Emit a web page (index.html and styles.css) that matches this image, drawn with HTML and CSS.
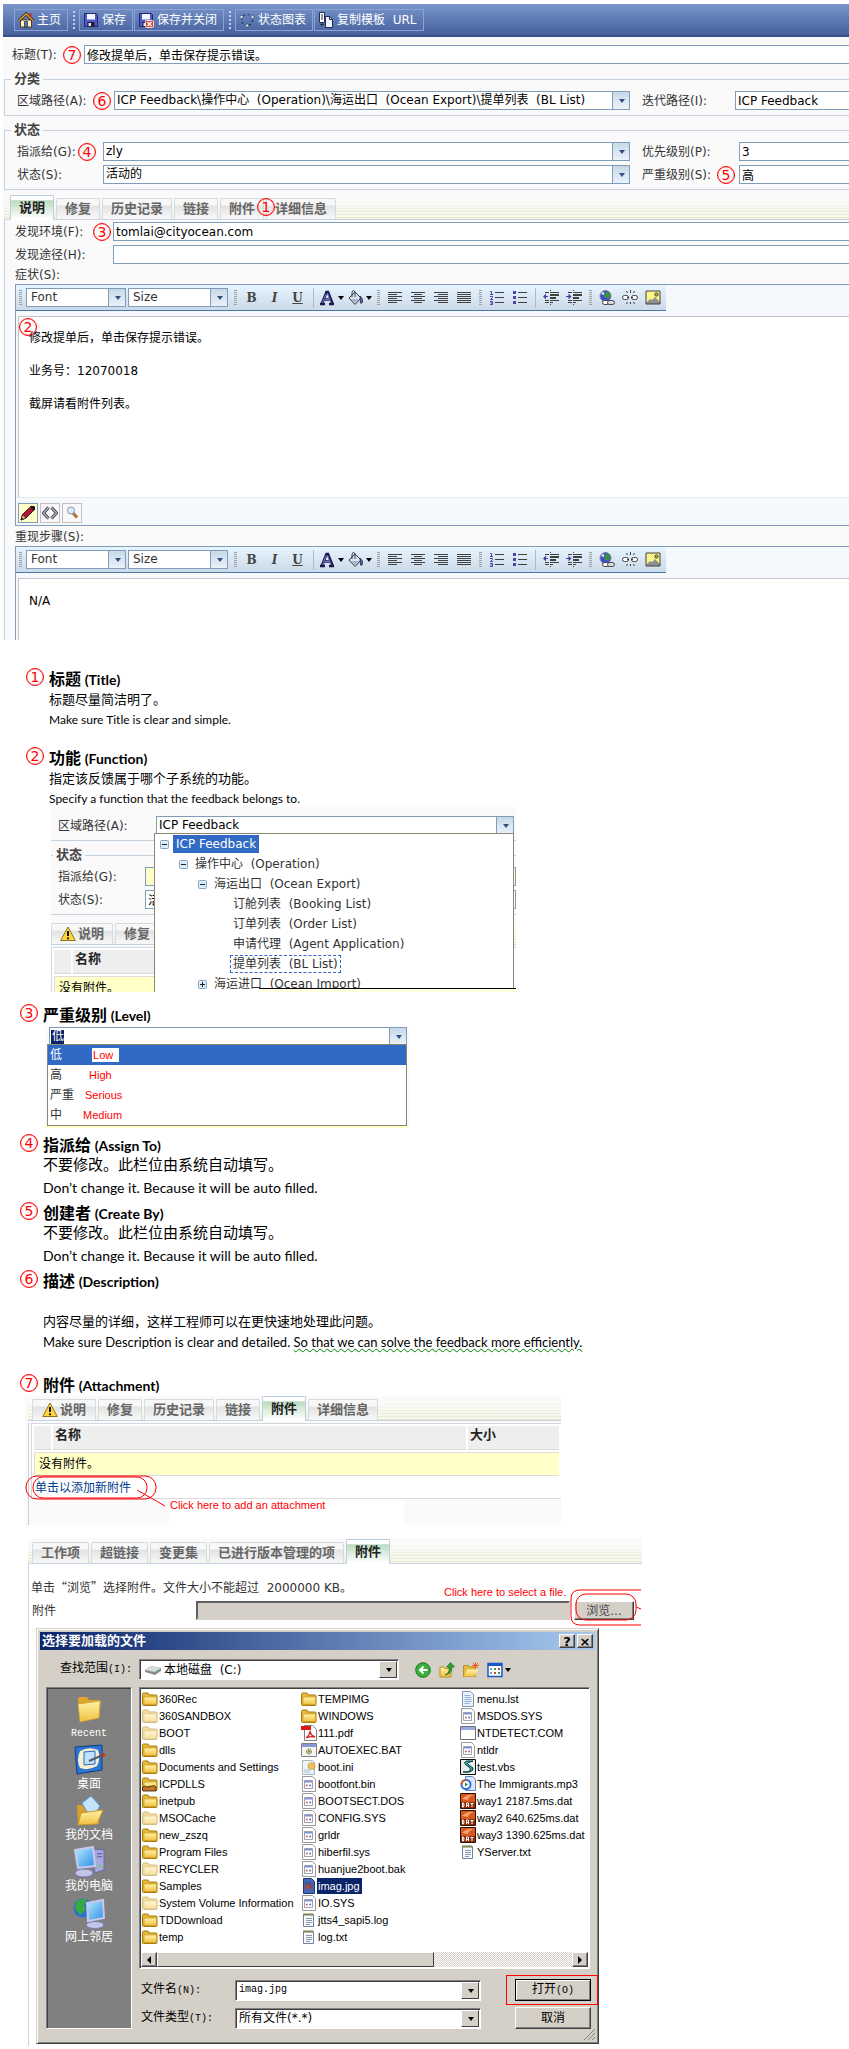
FILE: index.html
```html
<!DOCTYPE html>
<html lang="zh-CN">
<head>
<meta charset="utf-8">
<title>ICP Feedback</title>
<link rel="stylesheet" href="styles.css">
</head>
<body>
<svg class="defs" aria-hidden="true">
  <defs>
    <linearGradient id="gFolder" x1="0" y1="0" x2="0" y2="1"><stop offset="0" stop-color="#fff3a8"/><stop offset="1" stop-color="#f0c040"/></linearGradient>
    <linearGradient id="gScreen" x1="0" y1="0" x2="1" y2="1"><stop offset="0" stop-color="#b8ecff"/><stop offset="1" stop-color="#2a8ce8"/></linearGradient>
    <pattern id="pDots" width="2" height="2" patternUnits="userSpaceOnUse"><rect width="2" height="2" fill="#ffffc0"/><rect width="1" height="1" fill="#f4ee50"/><rect x="1" y="1" width="1" height="1" fill="#f4ee50"/></pattern>
  </defs>
  <symbol id="i-home" viewBox="0 0 16 16"><path d="M2.5 8h11v7h-11z" fill="#fff2c8" stroke="#5a4020"/><path d="M1 8.5 8 2l7 6.5" fill="none" stroke="#2a2010" stroke-width="3"/><path d="M1 8.5 8 2l7 6.5" fill="none" stroke="#e8a830" stroke-width="1.4"/><path d="M11.500 1h2v4h-2z" fill="#c03020"/><path d="M6.500 9.500h3V15h-3z" fill="#5080c0" stroke="#403020" stroke-width=".8"/></symbol>
  <symbol id="i-save" viewBox="0 0 16 16"><path d="M1.500 1.500h12l1 1v12h-13z" fill="#5058c8" stroke="#202878"/><path d="M4 2h8v5.500H4z" fill="#f4f6ff"/><path d="M4.500 10h7v4.500h-7z" fill="#202030"/><path d="M5.500 11h2.500v3H5.500z" fill="#e8e8f0"/></symbol>
  <symbol id="i-saveclose" viewBox="0 0 16 16"><use href="#i-save"/><rect x="7.500" y="8.500" width="8" height="7" rx="1" fill="#e04030" stroke="#fff" stroke-width=".8"/><path d="m9.500 10 4 4m0-4-4 4" stroke="#fff" stroke-width="1.500"/></symbol>
  <symbol id="i-chart" viewBox="0 0 16 16"><circle cx="8" cy="8" r="5.500" fill="none" stroke="#26304c" stroke-width="1.200" stroke-dasharray="2 2.300"/><g fill="#dfe6f4" stroke="#26304c" stroke-width=".5"><circle cx="2.500" cy="5" r="1.600"/><circle cx="13.500" cy="5" r="1.600"/><circle cx="8" cy="13.500" r="1.600"/></g></symbol>
  <symbol id="i-copy" viewBox="0 0 16 16"><path d="M1.500.5h5v10h-5z" fill="#fff" stroke="#203050"/><path d="M3 3h2M3 5h2M3 7h2" stroke="#203050"/><path d="M7.500 4.500h4l3 3v8h-7z" fill="#eef2fa" stroke="#203050"/><path d="M11.500 4.500v3h3" fill="none" stroke="#203050"/><path d="M2 12.500h4m-2-2v4" stroke="#203050"/></symbol>
  <symbol id="i-color" viewBox="0 0 16 16"><path d="M1 14h5m4 0h5M3 13.500 7.500 2h1.500l4.500 11.500M5.500 9.500h6" fill="none" stroke="#18184c" stroke-width="2.600"/><path d="M7 3.500 3.500 13M8.500 3l3.500 10M5.500 9.500h5" fill="none" stroke="#7078c8" stroke-width="1"/></symbol>
  <symbol id="i-bucket" viewBox="0 0 16 16"><path d="m2 8 6-6 6 6-6 6.500z" fill="#dfe4ec" stroke="#30384c"/><path d="M5 7V3q0-2.500 1.500-2.500T8 3v4" fill="none" stroke="#30384c"/><path d="M13 6q3 2 2.500 6-.5 2-2 1z" fill="#5a6ab8" stroke="#20284c" stroke-width=".8"/><path d="m4 9 4 4 4-4z" fill="#a8b4c8"/></symbol>
  <symbol id="i-left" viewBox="0 0 16 16"><path d="M1 2.500h14M1 4.500h9M1 6.500h14M1 8.500h9M1 10.500h14M1 12.500h9" stroke="#404040"/></symbol>
  <symbol id="i-center" viewBox="0 0 16 16"><path d="M1 2.500h14M4 4.500h8M1 6.500h14M4 8.500h8M1 10.500h14M4 12.500h8" stroke="#404040"/></symbol>
  <symbol id="i-right" viewBox="0 0 16 16"><path d="M1 2.500h14M5 4.500h10M1 6.500h14M5 8.500h10M1 10.500h14M5 12.500h10" stroke="#404040"/></symbol>
  <symbol id="i-full" viewBox="0 0 16 16"><path d="M1 2.500h14M1 4.500h14M1 6.500h14M1 8.500h14M1 10.500h14M1 12.500h14" stroke="#404040"/></symbol>
  <symbol id="i-ol" viewBox="0 0 16 16"><path d="M6 2.500h9M6 7.500h9M6 12.500h9" stroke="#404040"/><path d="M1 1.500h1.500v3M1 4.500h3M1 6.500h2.500v1L1.500 9.500H4M1 11.500h2.500v3H1m.5-1.500h2" fill="none" stroke="#4848a8"/></symbol>
  <symbol id="i-ul" viewBox="0 0 16 16"><path d="M6 2.500h9M6 7.500h9M6 12.500h9" stroke="#404040"/><path d="M1 1h3v3H1zM1 6h3v3H1zM1 11h3v3H1z" fill="#4848a8"/></symbol>
  <symbol id="i-outdent" viewBox="0 0 16 16"><path d="M2 2.500h4m1 0h9M2 10.500h4m1 0h9M2 12.500h4m1 0h3M7.500 0v1m0 13v1" stroke="#404040"/><path d="M7 4h9v2H7zM7 7h6v2H7z" fill="#404040"/><path d="M0 6.500 3 3.500V6h2v1H3v2.500z" fill="#4040a0"/></symbol>
  <symbol id="i-indent" viewBox="0 0 16 16"><path d="M2 2.500h4m1 0h9M2 10.500h4m1 0h9M2 12.500h4m1 0h3M7.500 0v1m0 13v1" stroke="#404040"/><path d="M7 4h9v2H7zM7 7h6v2H7z" fill="#404040"/><path d="M5.500 6.500 2.500 3.500V6H0v1h2.500v2.500z" fill="#4040a0"/></symbol>
  <symbol id="i-link" viewBox="0 0 16 16"><circle cx="6.500" cy="6" r="5.500" fill="#4048e0" stroke="#808488"/><path d="M5 4q2-3 5-2 2 3 1 5-2 3-4 1-3-1-2-4z" fill="#389048"/><path d="M2 4q1-2 3-2v3z" fill="#e8eef8"/><rect x="3.500" y="10.500" width="7" height="4" rx="2" fill="#fff" stroke="#404040"/><rect x="8.500" y="10.500" width="7" height="4" rx="2" fill="#d8dce0" stroke="#404040"/></symbol>
  <symbol id="i-unlink" viewBox="0 0 16 16"><rect x=".5" y="5.500" width="6" height="4" rx="2" fill="#fff" stroke="#404040"/><rect x="9.500" y="5.500" width="6" height="4" rx="2" fill="#fff" stroke="#404040"/><path d="M5 7.500h2m2 0h2M4.500 1l1 2M8.500 0v3M12.500 1l-1 2M4.500 14l1-2M8.500 14v-2M12.500 14l-1-2" stroke="#404040"/></symbol>
  <symbol id="i-image" viewBox="0 0 16 16"><path d="M1 1h14v13H1z" fill="url(#pDots)"/><path d="m1 13 4-4 2 1 3-3 5 5v2H1z" fill="#909090"/><circle cx="11.500" cy="4.500" r="1.700" fill="#a8a040" stroke="#404040" stroke-width=".8"/><path d="M1 1h14v13H1z" fill="none" stroke="#404040"/></symbol>
  <symbol id="i-pencil" viewBox="0 0 16 16"><path d="m1 15 1.500-5.500L11 1.500l3.500 3L6 13z" fill="#b01838" stroke="#381018"/><path d="m1 15 1.500-5L6 13z" fill="#f0d8b0" stroke="#381018" stroke-width=".7"/><path d="m1 15 .8-2.500L3.500 14zM10 2l1-1h3l1 1v3l-1.500.5z" fill="#201018"/></symbol>
  <symbol id="i-html" viewBox="0 0 16 16"><path d="M6.500 2.500 1.500 8l5 5.500M9.500 2.500l5 5.500-5 5.500" fill="none" stroke="#303040" stroke-width="3"/><path d="M6.500 2.500 1.500 8l5 5.500M9.500 2.500l5 5.500-5 5.500" fill="none" stroke="#b0b0c8" stroke-width="1.400"/></symbol>
  <symbol id="i-zoom" viewBox="0 0 16 16"><path d="m9 8 4 4.500" stroke="#b07020" stroke-width="3"/><circle cx="7" cy="5.500" r="3.500" fill="#d8f0ff" stroke="#8890a8"/></symbol>
  <symbol id="i-warn" viewBox="0 0 16 16"><path d="M8 1 15.300 14.500H.7z" fill="#ffd83a" stroke="#8a7420" stroke-linejoin="round"/><path d="M8 5v5" stroke="#101010" stroke-width="2"/><circle cx="8" cy="12.300" r="1.100" fill="#101010"/></symbol>
  <symbol id="i-minus" viewBox="0 0 9 9"><rect x=".5" y=".5" width="8" height="8" rx="1" fill="#dcebf8" stroke="#88a4c0"/><path d="M2 4.500h5" stroke="#202020"/></symbol>
  <symbol id="i-plus" viewBox="0 0 9 9"><rect x=".5" y=".5" width="8" height="8" rx="1" fill="#dcebf8" stroke="#88a4c0"/><path d="M2 4.500h5M4.500 2v5" stroke="#202020"/></symbol>

  <symbol id="f-dir" viewBox="0 0 16 16"><path d="M.5 3.500q0-1.500 1-1.500h4.500l1 2h7q1 0 1 1v8.500q0 1-1 1h-12.500q-1 0-1-1z" fill="#e8b838" stroke="#a87c10"/><path d="M2 6h12.500v7.500H2z" fill="url(#gFolder)" stroke="#c89820" stroke-width=".7"/></symbol>
  <symbol id="f-share" viewBox="0 0 16 16"><use href="#f-dir"/><path d="M0 12q2-3 5-1l5-1q3-1 4 1v4H1z" fill="#c07828" stroke="#301c08" stroke-width=".8"/></symbol>
  <symbol id="f-sys" viewBox="0 0 16 16"><path d="M1.500.5h10l3 3v12h-13z" fill="#fdfdfd" stroke="#9a9a9a"/><path d="M3.500 4.500h8v8h-8z" fill="#fff" stroke="#a0a0b0"/><path d="M4 5h7v1.500H4z" fill="#8090e0"/><circle cx="5.800" cy="9.500" r="1" fill="#d06060"/><circle cx="9.200" cy="9.500" r="1" fill="#6070d0"/></symbol>
  <symbol id="f-pdf" viewBox="0 0 16 16"><path d="M3.500.5h8l4 4v11h-12z" fill="#fff" stroke="#808080"/><path d="M0 1h10v4H0z" fill="#d81818"/><path d="M5 13q4-3 4-7 1 5 5 6-5-1-9 1z" fill="none" stroke="#d82020" stroke-width="1.300"/></symbol>
  <symbol id="f-bat" viewBox="0 0 16 16"><path d="M.5 1.500h15v13H.5z" fill="#f4f4f0" stroke="#808080"/><path d="M1 2h14v3H1z" fill="#8898d0"/><circle cx="8" cy="9.500" r="2.500" fill="#e0d890" stroke="#606040" stroke-dasharray="1.300 .8"/><circle cx="8" cy="9.500" r="1" fill="#606040"/></symbol>
  <symbol id="f-com" viewBox="0 0 16 16"><path d="M.5 1.500h15v13H.5z" fill="#fff" stroke="#707078"/><path d="M1 2h14v3H1z" fill="#98a8e0"/></symbol>
  <symbol id="f-ini" viewBox="0 0 16 16"><path d="M1.500 1.500h10l2 2v12h-12z" fill="#eaf4fa" stroke="#a8b8c0"/><circle cx="10.500" cy="7" r="3.500" fill="#f0c060" stroke="#b88c30" stroke-dasharray="1.600 1"/><path d="M3 11h6M3 13h6" stroke="#a8c0d0"/></symbol>
  <symbol id="f-txt" viewBox="0 0 16 16"><path d="M2.500 2.500h10v12h-10z" fill="#f4f8ff" stroke="#7080a0"/><path d="M3 1v3m2-3v3m2-3v3m2-3v3m2-3v3" stroke="#808030"/><path d="M5 6.500h6M5 8.500h6M5 10.500h6M5 12.500h4" stroke="#708090" stroke-width=".8"/></symbol>
  <symbol id="f-lst" viewBox="0 0 16 16"><path d="M2.500.5h8l3 3v12h-11z" fill="#eaf2ff" stroke="#8094b8"/><path d="M4.500 4.500h6M4.500 6.500h7M4.500 8.500h7M4.500 10.500h7M4.500 12.500h5" stroke="#88a4d8" stroke-width=".9"/></symbol>
  <symbol id="f-vbs" viewBox="0 0 16 16"><path d="M.5.500h15v15H.5z" fill="#e8eeee" stroke="#101010"/><path d="M13 2H7q-4 1-1 4l3 2q3 3-1 5H3h6q5-1 4-4l-4-3q-3-2 1-3z" fill="#30b0a8" stroke="#083838"/></symbol>
  <symbol id="f-mp3" viewBox="0 0 16 16"><path d="M5.500.5h7l3 3v11h-10z" fill="#dce8ff" stroke="#6080c0"/><circle cx="6" cy="8.500" r="4.500" fill="#fff" stroke="#3070d8" stroke-width="2"/><path d="M1.500 8.500A4.500 4.500 0 0 1 6 4" fill="none" stroke="#e06020" stroke-width="2"/><path d="m5 6.500 3 2-3 2z" fill="#209040"/></symbol>
  <symbol id="f-dat" viewBox="0 0 16 16"><path d="M.5.500h15v15H.5z" fill="#d85820" stroke="#301000"/><path d="M2 6q5-5 12-4-5 1-6 5z" fill="#f4a070"/><path d="M1 9h14v6H1z" fill="#8c2c08"/><path d="M2.500 10v4h1q1-2 0-4zM6.500 14v-4h2v4m-2-1.500h2M10.500 10.500h3m-1.500 0V14" fill="none" stroke="#fff"/></symbol>
  <symbol id="f-jpg" viewBox="0 0 16 16"><path d="M2.500.5h8l3 3v12h-11z" fill="#4468b8" stroke="#203878"/><path d="M4 4h8v7H4z" fill="#705070"/><path d="M5 7h3v4H5z" fill="#b84838"/><path d="M4 4h8v2H4z" fill="#405890"/></symbol>

  <symbol id="p-recent" viewBox="0 0 32 32"><path d="M5 6q0-2 2-2h7l2 3h10q2 0 2 2l-2 16-19 4z" fill="#e0a828"/><path d="m5 11 22-3-1 17-19 4z" fill="url(#gFolder)" stroke="#c89828" stroke-width=".7"/></symbol>
  <symbol id="p-desk" viewBox="0 0 32 32"><path d="m2 3 27-2v25L4 30z" fill="#2c74d0" stroke="#103c88"/><path d="M7 7q9-5 18-1 3 8-1 16-9 5-17 2-4-8 0-17z" fill="#f6efd0"/><path d="m11 8 11-1v13l-11 1z" fill="#bfe0ff" stroke="#2868c0"/><path d="m16 17 14-6" stroke="#505868" stroke-width="2"/><circle cx="30" cy="11" r="2" fill="#c83018"/></symbol>
  <symbol id="p-docs" viewBox="0 0 32 32"><path d="M4 10h8l2 3h12v16H5z" fill="#d8a028"/><path d="m9 8 9-7 9 10-9 13z" fill="#c4e4fc" stroke="#5898d8"/><path d="m5 30 3-12 22-3-6 14z" fill="url(#gFolder)" stroke="#c89828"/></symbol>
  <symbol id="p-comp" viewBox="0 0 32 32"><path d="m20 3 11 1v20l-9 3z" fill="#a8a8dc" stroke="#6868a8"/><path d="m24 8 5-.500M24 11l5-.500" stroke="#585898"/><circle cx="27" cy="20" r="1.500" fill="#50e050"/><ellipse cx="11" cy="27" rx="9" ry="4" fill="#c4c4e8" stroke="#7878b0"/><path d="m2 4 18-3 2 19-17 2z" fill="url(#gScreen)" stroke="#c8c8ec" stroke-width="2"/></symbol>
  <symbol id="p-net" viewBox="0 0 32 32"><circle cx="10" cy="11" r="9.500" fill="#2870d0"/><path d="M3 5q6-5 11-2l-3 5 2 5-6 5-5-6z" fill="#38a840"/><ellipse cx="22" cy="28" rx="9" ry="3.500" fill="#c4c4e8" stroke="#7878b0"/><path d="m14 6 16-3 1 18-16 3z" fill="url(#gScreen)" stroke="#c8c8ec" stroke-width="2"/></symbol>

  <symbol id="n-drive" viewBox="0 0 16 16"><path d="m0 8 6-4 10 2v3l-6 4-10-3z" fill="#888c90"/><path d="m0 8 6-4 10 2-6 4z" fill="#d8dcdf"/><circle cx="12" cy="9.500" r="1" fill="#40c040"/></symbol>
  <symbol id="n-back" viewBox="0 0 16 16"><circle cx="8" cy="8" r="7.300" fill="#3cae3c" stroke="#187818"/><path d="M12.500 8H5m3.500-3.500L5 8l3.500 3.500" fill="none" stroke="#fff" stroke-width="2"/></symbol>
  <symbol id="n-up" viewBox="0 0 16 16"><path d="M1 5h4l1 1.500h6V15H1z" fill="url(#gFolder)" stroke="#b89028"/><path d="M6 13q5-2 4-8H7.500L11.500.500l4 4.500H13q0 7-7 8z" fill="#30a030" stroke="#106010" stroke-width=".6"/></symbol>
  <symbol id="n-new" viewBox="0 0 16 16"><path d="M.5 3.500h5l1 1.500h6v9.500H.5z" fill="#e8b838" stroke="#b89028"/><path d="m1 14.500 3-7h11l-3 7z" fill="url(#gFolder)"/><path d="M12.500 0v7M9 3.500h7M10 1l5 5m0-5-5 5" stroke="#f06020"/></symbol>
  <symbol id="n-view" viewBox="0 0 16 16"><path d="M1 1.500h14v13H1z" fill="#fff" stroke="#1858c8" stroke-width="1.500"/><path d="M1 1h14v3H1z" fill="#1858c8"/><path d="M3 6h2v2H3zM3 10h2v2H3z" fill="#8098c8"/><path d="M7 6h2v2H7zM11 10h2v2h-2z" fill="#38a048"/><path d="M11 6h2v2h-2zM7 10h2v2H7z" fill="#b05030"/></symbol>
</svg>

<main class="page">
  <section class="app">
    <nav class="toolbar" aria-label="工具栏">
      <button class="tool"><svg class="ic"><use href="#i-home"/></svg>主页</button>
      <i class="dots"></i>
      <button class="tool"><svg class="ic"><use href="#i-save"/></svg>保存</button>
      <button class="tool"><svg class="ic"><use href="#i-saveclose"/></svg>保存并关闭</button>
      <i class="dots"></i>
      <button class="tool"><svg class="ic"><use href="#i-chart"/></svg>状态图表</button>
      <button class="tool"><svg class="ic"><use href="#i-copy"/></svg>复制模板&nbsp; URL</button>
    </nav>

    <div class="field title-row">
      <div class="lab lab-title"><label for="title">标题(T):</label><b class="num">7</b></div>
      <input class="box bleed" id="title" value="修改提单后，单击保存提示错误。">
    </div>

    <fieldset class="group">
      <legend>分类</legend>
      <div class="field">
        <div class="lab lab-area"><label for="area">区域路径(A):</label><b class="num">6</b></div>
        <span class="combo"><select id="area"><option>ICP Feedback\操作中心&nbsp; (Operation)\海运出口&nbsp; (Ocean Export)\提单列表&nbsp; (BL List)</option></select></span>
        <div class="lab lab-iter"><label for="iter">迭代路径(I):</label></div>
        <input class="box bleed side side-iter" id="iter" value="ICP Feedback">
      </div>
    </fieldset>

    <fieldset class="group">
      <legend>状态</legend>
      <div class="field">
        <div class="lab lab-state"><label for="assign">指派给(G):</label><b class="num">4</b></div>
        <span class="combo"><select id="assign"><option>zly</option></select></span>
        <div class="lab lab-side"><label for="prio">优先级别(P):</label></div>
        <input class="box bleed side" id="prio" value="3">
      </div>
      <div class="field">
        <div class="lab lab-state"><label for="state">状态(S):</label></div>
        <span class="combo"><select id="state"><option>活动的</option></select></span>
        <div class="lab lab-side"><label for="sev">严重级别(S):</label><b class="num">5</b></div>
        <input class="box bleed side" id="sev" value="高">
      </div>
    </fieldset>

    <div class="tabs">
      <button class="tab on">说明</button><button class="tab">修复</button><button class="tab">历史记录</button><button class="tab">链接</button><button class="tab">附件</button><button class="tab">详细信息</button>
      <b class="num over-tab">1</b>
    </div>

    <div class="panel">
      <div class="field">
        <div class="lab lab-found"><label for="env">发现环境(F):</label><b class="num">3</b></div>
        <input class="box bleed" id="env" value="tomlai@cityocean.com">
      </div>
      <div class="field">
        <div class="lab lab-found"><label for="way">发现途径(H):</label></div>
        <input class="box bleed" id="way" value="">
      </div>
      <div class="caption">症状(S):</div>
      <div class="editor">
        <div class="edbar">
          <i class="grip"></i><span class="combo small"><select aria-label="Font"><option>Font</option></select></span><span class="combo small"><select aria-label="Size"><option>Size</option></select></span>
          <i class="grip"></i><button class="eb bold">B</button><button class="eb ital">I</button><button class="eb under">U</button>
          <i class="sep"></i><button class="eb wide" aria-label="Color"><svg class="ic"><use href="#i-color"/></svg><i class="caret"></i></button><button class="eb wide" aria-label="Fill"><svg class="ic"><use href="#i-bucket"/></svg><i class="caret"></i></button>
          <i class="grip"></i><button class="eb" aria-label="Left"><svg class="ic"><use href="#i-left"/></svg></button><button class="eb" aria-label="Center"><svg class="ic"><use href="#i-center"/></svg></button><button class="eb" aria-label="Right"><svg class="ic"><use href="#i-right"/></svg></button><button class="eb" aria-label="Justify"><svg class="ic"><use href="#i-full"/></svg></button>
          <i class="grip"></i><button class="eb" aria-label="Numbers"><svg class="ic"><use href="#i-ol"/></svg></button><button class="eb" aria-label="Bullets"><svg class="ic"><use href="#i-ul"/></svg></button>
          <i class="sep"></i><button class="eb" aria-label="Outdent"><svg class="ic"><use href="#i-outdent"/></svg></button><button class="eb" aria-label="Indent"><svg class="ic"><use href="#i-indent"/></svg></button>
          <i class="grip"></i><button class="eb" aria-label="Link"><svg class="ic"><use href="#i-link"/></svg></button><button class="eb" aria-label="Unlink"><svg class="ic"><use href="#i-unlink"/></svg></button><button class="eb" aria-label="Image"><svg class="ic"><use href="#i-image"/></svg></button>
        </div>
        <div class="edbody">
          <b class="num over-body">2</b>
          <p>修改提单后，单击保存提示错误。</p>
          <p>业务号：12070018</p>
          <p>截屏请看附件列表。</p>
        </div>
        <div class="edfoot">
          <button class="mode on" aria-label="Design"><svg class="ic"><use href="#i-pencil"/></svg></button>
          <button class="mode" aria-label="HTML"><svg class="ic"><use href="#i-html"/></svg></button>
          <button class="mode" aria-label="Preview"><svg class="ic"><use href="#i-zoom"/></svg></button>
        </div>
      </div>
      <div class="caption">重现步骤(S):</div>
      <div class="editor open">
        <div class="edbar">
          <i class="grip"></i><span class="combo small"><select aria-label="Font"><option>Font</option></select></span><span class="combo small"><select aria-label="Size"><option>Size</option></select></span>
          <i class="grip"></i><button class="eb bold">B</button><button class="eb ital">I</button><button class="eb under">U</button>
          <i class="sep"></i><button class="eb wide" aria-label="Color"><svg class="ic"><use href="#i-color"/></svg><i class="caret"></i></button><button class="eb wide" aria-label="Fill"><svg class="ic"><use href="#i-bucket"/></svg><i class="caret"></i></button>
          <i class="grip"></i><button class="eb" aria-label="Left"><svg class="ic"><use href="#i-left"/></svg></button><button class="eb" aria-label="Center"><svg class="ic"><use href="#i-center"/></svg></button><button class="eb" aria-label="Right"><svg class="ic"><use href="#i-right"/></svg></button><button class="eb" aria-label="Justify"><svg class="ic"><use href="#i-full"/></svg></button>
          <i class="grip"></i><button class="eb" aria-label="Numbers"><svg class="ic"><use href="#i-ol"/></svg></button><button class="eb" aria-label="Bullets"><svg class="ic"><use href="#i-ul"/></svg></button>
          <i class="sep"></i><button class="eb" aria-label="Outdent"><svg class="ic"><use href="#i-outdent"/></svg></button><button class="eb" aria-label="Indent"><svg class="ic"><use href="#i-indent"/></svg></button>
          <i class="grip"></i><button class="eb" aria-label="Link"><svg class="ic"><use href="#i-link"/></svg></button><button class="eb" aria-label="Unlink"><svg class="ic"><use href="#i-unlink"/></svg></button><button class="eb" aria-label="Image"><svg class="ic"><use href="#i-image"/></svg></button>
        </div>
        <div class="edbody short"><p>N/A</p></div>
      </div>
    </div>
  </section>

  <section class="item first">
    <b class="num">1</b>
    <div>
      <h2>标题 <small>(Title)</small></h2>
      <p>标题尽量简洁明了。</p>
      <p class="en">Make sure Title is clear and simple.</p>
    </div>
  </section>

  <section class="item second">
    <b class="num">2</b>
    <div>
      <h2>功能 <small>(Function)</small></h2>
      <p>指定该反馈属于哪个子系统的功能。</p>
      <p class="en">Specify a function that the feedback belongs to.</p>
    </div>
  </section>

  <figure class="shot shot-area">
    <div class="field area-row">
      <div class="lab"><label for="area2">区域路径(A):</label></div>
      <span class="combo"><select id="area2"><option>ICP Feedback</option></select></span>
    </div>
    <fieldset class="group">
      <legend>状态</legend>
      <div class="field">
        <div class="lab lab-state2"><label for="assign2">指派给(G):</label></div>
        <input class="box need" id="assign2" value="">
      </div>
      <div class="field">
        <div class="lab lab-state2"><label for="state2">状态(S):</label></div>
        <input class="box" id="state2" value="活动的">
      </div>
    </fieldset>
    <div class="tabs plain"><button class="tab warn"><svg class="ic"><use href="#i-warn"/></svg>说明</button><button class="tab">修复</button></div>
    <div class="grid-wrap">
      <table class="files">
        <tr><th class="c0"></th><th>名称</th></tr>
        <tr><td colspan="2">没有附件。</td></tr>
      </table>
    </div>
    <ul class="tree">
      <li><svg class="pm"><use href="#i-minus"/></svg><span class="picked">ICP Feedback</span></li>
      <li class="l2"><svg class="pm"><use href="#i-minus"/></svg><span>操作中心&nbsp; (Operation)</span></li>
      <li class="l3"><svg class="pm"><use href="#i-minus"/></svg><span>海运出口&nbsp; (Ocean Export)</span></li>
      <li class="l4"><span>订舱列表&nbsp; (Booking List)</span></li>
      <li class="l4"><span>订单列表&nbsp; (Order List)</span></li>
      <li class="l4"><span>申请代理&nbsp; (Agent Application)</span></li>
      <li class="l4"><span class="focus">提单列表&nbsp; (BL List)</span></li>
      <li class="l3"><svg class="pm"><use href="#i-plus"/></svg><span>海运进口&nbsp; (Ocean Import)</span></li>
    </ul>
    <i class="tip"></i>
  </figure>

  <section class="item third">
    <b class="num">3</b>
    <div>
      <h2>严重级别 <small>(Level)</small></h2>
      <div class="shot shot-level">
        <span class="combo"><select class="sel-text" aria-label="严重级别"><option>低</option></select></span>
        <ul class="menu">
          <li class="hot">低<em class="low">Low</em></li>
          <li>高<em class="high">High</em></li>
          <li>严重<em class="serious">Serious</em></li>
          <li>中<em class="medium">Medium</em></li>
        </ul>
      </div>
    </div>
  </section>

  <section class="item fourth">
    <b class="num">4</b>
    <div>
      <h2>指派给 <small>(Assign To)</small></h2>
      <p class="big">不要修改。此栏位由系统自动填写。</p>
      <p class="en big-en">Don’t change it. Because it will be auto filled.</p>
    </div>
  </section>

  <section class="item fifth">
    <b class="num">5</b>
    <div>
      <h2>创建者 <small>(Create By)</small></h2>
      <p class="big">不要修改。此栏位由系统自动填写。</p>
      <p class="en big-en">Don’t change it. Because it will be auto filled.</p>
    </div>
  </section>

  <section class="item fifth">
    <b class="num">6</b>
    <div>
      <h2>描述 <small>(Description)</small></h2>
      <p class="spaced">内容尽量的详细，这样工程师可以在更快速地处理此问题。</p>
      <p class="en mid-en">Make sure Description is clear and detailed. <span class="wavy">So that we can solve the feedback more efficiently.</span></p>
    </div>
  </section>

  <section class="item seventh">
    <b class="num">7</b>
    <div><h2>附件 <small>(Attachment)</small></h2></div>
  </section>

  <figure class="shot shot-att">
    <div class="tabs"><button class="tab warn"><svg class="ic"><use href="#i-warn"/></svg>说明</button><button class="tab">修复</button><button class="tab">历史记录</button><button class="tab">链接</button><button class="tab on">附件</button><button class="tab">详细信息</button></div>
    <div class="panel att-panel">
      <div class="grid-wrap">
        <table class="files">
          <tr><th class="c0"></th><th>名称</th><th class="c2">大小</th></tr>
          <tr><td colspan="3">没有附件。</td></tr>
        </table>
        <a class="add" href="#add">单击以添加新附件</a>
      </div>
      <div class="att-end"></div>
    </div>
    <svg class="ink ink-add" viewBox="0 0 150 34"><rect x="1" y="1" width="130" height="23" rx="11"/><rect x="8" y="2" width="114" height="21" rx="10"/><path d="m112 15 28 16"/></svg>
    <span class="note note-add">Click here to add an attachment</span>
  </figure>

  <figure class="shot shot-pick">
    <div class="tabs"><button class="tab">工作项</button><button class="tab">超链接</button><button class="tab">变更集</button><button class="tab">已进行版本管理的项</button><button class="tab on">附件</button></div>
    <div class="panel pick-panel">
      <p class="hint">单击<span class="cjk">“浏览”</span>选择附件。文件大小不能超过&nbsp; 2000000 KB。</p>
      <div class="field pick-row">
        <div class="lab"><label for="path">附件</label></div>
        <input class="path" id="path" value="">
        <button class="w-btn browse">浏览...</button>
      </div>

      <div class="dialog" role="dialog" aria-label="选择要加载的文件">
        <div class="d-title"><span>选择要加载的文件</span><button class="w-btn cap">?</button><button class="w-btn cap">×</button></div>
        <div class="d-body">
          <label class="d-look" for="look">查找范围<span class="mono">(I):</span></label>
          <div class="d-nav">
            <span class="w-combo look"><svg class="ic"><use href="#n-drive"/></svg><select id="look"><option>本地磁盘&nbsp; (C:)</option></select></span>
            <button class="nav" aria-label="Back"><svg class="ic"><use href="#n-back"/></svg></button>
            <button class="nav" aria-label="Up"><svg class="ic"><use href="#n-up"/></svg></button>
            <button class="nav" aria-label="New folder"><svg class="ic"><use href="#n-new"/></svg></button>
            <button class="nav" aria-label="Views"><svg class="ic"><use href="#n-view"/></svg><i class="caret"></i></button>
          </div>
          <div class="places">
            <button class="place"><svg><use href="#p-recent"/></svg><span class="mono">Recent</span></button>
            <button class="place"><svg><use href="#p-desk"/></svg>桌面</button>
            <button class="place"><svg><use href="#p-docs"/></svg>我的文档</button>
            <button class="place"><svg><use href="#p-comp"/></svg>我的电脑</button>
            <button class="place"><svg><use href="#p-net"/></svg>网上邻居</button>
          </div>
          <div class="d-main">
            <div class="list">
              <ul>
                <li><svg class="ic"><use href="#f-dir"/></svg><span>360Rec</span></li>
                <li class="dim"><svg class="ic"><use href="#f-dir"/></svg><span>360SANDBOX</span></li>
                <li class="dim"><svg class="ic"><use href="#f-dir"/></svg><span>BOOT</span></li>
                <li><svg class="ic"><use href="#f-dir"/></svg><span>dlls</span></li>
                <li><svg class="ic"><use href="#f-dir"/></svg><span>Documents and Settings</span></li>
                <li><svg class="ic"><use href="#f-share"/></svg><span>ICPDLLS</span></li>
                <li><svg class="ic"><use href="#f-dir"/></svg><span>inetpub</span></li>
                <li class="dim"><svg class="ic"><use href="#f-dir"/></svg><span>MSOCache</span></li>
                <li><svg class="ic"><use href="#f-dir"/></svg><span>new_zszq</span></li>
                <li><svg class="ic"><use href="#f-dir"/></svg><span>Program Files</span></li>
                <li class="dim"><svg class="ic"><use href="#f-dir"/></svg><span>RECYCLER</span></li>
                <li><svg class="ic"><use href="#f-dir"/></svg><span>Samples</span></li>
                <li class="dim"><svg class="ic"><use href="#f-dir"/></svg><span>System Volume Information</span></li>
                <li><svg class="ic"><use href="#f-dir"/></svg><span>TDDownload</span></li>
                <li><svg class="ic"><use href="#f-dir"/></svg><span>temp</span></li>
                <li><svg class="ic"><use href="#f-dir"/></svg><span>TEMPIMG</span></li>
                <li><svg class="ic"><use href="#f-dir"/></svg><span>WINDOWS</span></li>
                <li><svg class="ic"><use href="#f-pdf"/></svg><span>111.pdf</span></li>
                <li><svg class="ic"><use href="#f-bat"/></svg><span>AUTOEXEC.BAT</span></li>
                <li><svg class="ic"><use href="#f-ini"/></svg><span>boot.ini</span></li>
                <li><svg class="ic"><use href="#f-sys"/></svg><span>bootfont.bin</span></li>
                <li><svg class="ic"><use href="#f-sys"/></svg><span>BOOTSECT.DOS</span></li>
                <li><svg class="ic"><use href="#f-sys"/></svg><span>CONFIG.SYS</span></li>
                <li><svg class="ic"><use href="#f-sys"/></svg><span>grldr</span></li>
                <li><svg class="ic"><use href="#f-sys"/></svg><span>hiberfil.sys</span></li>
                <li><svg class="ic"><use href="#f-sys"/></svg><span>huanjue2boot.bak</span></li>
                <li class="chosen"><svg class="ic"><use href="#f-jpg"/></svg><span>imag.jpg</span></li>
                <li><svg class="ic"><use href="#f-sys"/></svg><span>IO.SYS</span></li>
                <li><svg class="ic"><use href="#f-txt"/></svg><span>jtts4_sapi5.log</span></li>
                <li><svg class="ic"><use href="#f-txt"/></svg><span>log.txt</span></li>
                <li><svg class="ic"><use href="#f-lst"/></svg><span>menu.lst</span></li>
                <li><svg class="ic"><use href="#f-sys"/></svg><span>MSDOS.SYS</span></li>
                <li><svg class="ic"><use href="#f-com"/></svg><span>NTDETECT.COM</span></li>
                <li><svg class="ic"><use href="#f-sys"/></svg><span>ntldr</span></li>
                <li><svg class="ic"><use href="#f-vbs"/></svg><span>test.vbs</span></li>
                <li><svg class="ic"><use href="#f-mp3"/></svg><span>The Immigrants.mp3</span></li>
                <li><svg class="ic"><use href="#f-dat"/></svg><span>way1 2187.5ms.dat</span></li>
                <li><svg class="ic"><use href="#f-dat"/></svg><span>way2 640.625ms.dat</span></li>
                <li><svg class="ic"><use href="#f-dat"/></svg><span>way3 1390.625ms.dat</span></li>
                <li><svg class="ic"><use href="#f-txt"/></svg><span>YServer.txt</span></li>
              </ul>
              <div class="scroll"><button class="w-btn arrow la" aria-label="左"></button><i class="thumb"></i><i class="track"></i><button class="w-btn arrow ra" aria-label="右"></button></div>
            </div>
            <div class="d-form">
              <label for="fname">文件名<span class="mono">(N):</span></label>
              <span class="w-combo"><select class="mono" id="fname"><option>imag.jpg</option></select></span>
              <button class="w-btn act main">打开<span class="mono">(O)</span><i class="mark"></i></button>
              <label for="ftype">文件类型<span class="mono">(T):</span></label>
              <span class="w-combo"><select id="ftype"><option>所有文件(*.*)</option></select></span>
              <button class="w-btn act">取消</button>
            </div>
          </div>
        </div>
        <svg class="resize" viewBox="0 0 12 12"><path d="M1 12 12 1M5 12l7-7M9 12l3-3" stroke="#808080" fill="none"/></svg>
      </div>
    </div>
    <svg class="ink ink-browse" viewBox="0 0 72 37"><path d="M71 1H10Q1 1 1 10v17q0 9 9 9h61"/><rect x="6" y="5" width="60" height="26" rx="10"/><path d="m66 18 5 2"/></svg>
    <span class="note note-browse">Click here to select a file.</span>
  </figure>
</main>
</body>
</html>
```
FILE: styles.css
```css
* { box-sizing: border-box; }

body {
  margin: 0;
  background: #fff;
  color: #333;
  font: 12px/18px "DejaVu Sans", "Noto Sans CJK SC", sans-serif;
}

p, h2, ul, figure { margin: 0; padding: 0; }
ul { list-style: none; }
button, input, select { font: inherit; color: inherit; margin: 0; padding: 0; border: 0; background: none; border-radius: 0; }
.defs { position: absolute; width: 0; height: 0; }
.ic { width: 16px; height: 16px; flex: none; }
.page { padding: 4px 0 6px; overflow: hidden; }
.mono { font-family: "Liberation Mono", monospace; font-size: 10px; }
.cjk { font-family: "Noto Sans CJK SC", sans-serif; }

.num {
  flex: none;
  width: 18px;
  height: 18px;
  border: 1px solid #f00;
  border-radius: 50%;
  box-shadow: inset 0 0 1px #f00;
  color: #f00;
  font: 14px/16px "DejaVu Sans", sans-serif;
  text-align: center;
}

/* work item form */
.app { margin-left: 3px; background: #fafafa; }

.toolbar {
  display: flex;
  align-items: flex-start;
  height: 33px;
  padding: 5px 0 0 11px;
  background: linear-gradient(#7a96cc, #45609c);
  border-bottom: 2px solid #34508c;
}
.tool {
  display: flex;
  align-items: center;
  gap: 3px;
  height: 22px;
  padding: 0 6px 0 3px;
  margin-right: 1px;
  border: 1px solid #8ba3d6;
  color: #fff;
  white-space: nowrap;
}
.dots { width: 2px; height: 18px; margin: 2px 4px 0 4px; background: repeating-linear-gradient(#c0d0f0 0 2px, transparent 2px 4px); }

.field { display: flex; align-items: center; }
.field + .field { margin-top: 4px; }
.lab { display: flex; flex: none; align-items: center; justify-content: space-between; white-space: nowrap; height: 19px; }
.title-row { padding-top: 8px; }
.lab-title { width: 81px; padding: 0 3px 0 9px; }
.lab-area { width: 109px; padding: 0 3px 0 12px; }
.lab-state { width: 98px; padding: 0 7px 0 12px; }
.lab-iter { width: 105px; padding-left: 12px; }
.lab-side { width: 109px; padding: 0 4px 0 12px; }
.lab-found { width: 98px; padding-right: 2px; }

.box, .combo {
  flex: 1;
  min-width: 0;
  height: 19px;
  border: 1px solid #7f9db9;
  background: #fff;
  color: #000;
}
.box { padding: 0 2px; }
.side { flex: 0 0 110px; }
.side-iter { flex: 0 0 114px; }
.bleed { border-right: 0; }
.need { background: #ffffc8; }
.combo { display: flex; position: relative; }
.combo select { appearance: none; width: 100%; height: 17px; line-height: 17px; padding: 0 18px 0 2px; outline: 0; }
.combo::before {
  content: "";
  position: absolute;
  inset: 0 0 0 auto;
  width: 16px;
  border-left: 1px solid #7f9db9;
  background: linear-gradient(#c8d8e8, #eaf2fa);
  pointer-events: none;
}
.combo::after, .caret {
  content: "";
  width: 0;
  height: 0;
  border: 3px solid transparent;
  border-top: 4px solid #2f4f7f;
  border-bottom: 0;
}
.combo::after { position: absolute; right: 4px; top: 7px; pointer-events: none; }

.group {
  margin: 6px 0 0 1px;
  padding: 3px 0 5px;
  border: 1px solid #c5d2e0;
  border-right: 0;
  min-width: 0;
}
.group + .group { margin-top: 5px; }
.group legend { margin-left: 6px; padding: 0 3px; font-size: 13px; font-weight: bold; color: #444; line-height: 18px; }

.tabs {
  position: relative;
  display: flex;
  align-items: flex-end;
  gap: 2px;
  height: 26px;
  margin: 4px 0 0 1px;
  padding-left: 6px;
  border-bottom: 1px solid #c5d2e0;
  background: linear-gradient(rgba(250, 250, 250, 1) 20%, rgba(250, 250, 250, 0)), repeating-linear-gradient(#f7f8e8 0 2px, #e2e6cc 2px 3px);
}
.tab {
  display: flex;
  align-items: center;
  gap: 2px;
  height: 21px;
  padding: 0 8px;
  border: 1px solid #d4dae2;
  border-bottom: 0;
  border-radius: 2px 2px 0 0;
  background: linear-gradient(#f8f8f8 30%, #e2e2e2 35%, #f6f6f6 90%);
  color: #666;
  font-size: 13px;
  font-weight: bold;
  white-space: nowrap;
}
.tab.on {
  height: 25px;
  margin-bottom: -1px;
  border-color: #bccddd;
  background: linear-gradient(#fff 15%, #bcdcc0 20%, #fff 95%);
  color: #222;
}
.over-tab { position: absolute; left: 253px; top: 4px; }

.panel { margin-left: 1px; padding: 2px 0 0 10px; border-left: 1px solid #c5d2e0; }
.caption { height: 20px; line-height: 22px; }

.editor { border: 1px solid #7f9db9; border-right: 0; background: #f5f9fd; }
.edbar {
  display: flex;
  align-items: center;
  width: max-content;
  height: 26px;
  padding: 0 2px 0 3px;
  background: linear-gradient(#e6f5ff, #ccd9e8);
  border-bottom: 1px solid #4a78a8;
}
.grip { width: 3px; height: 15px; margin: 0 3px 0 5px; background: repeating-linear-gradient(#a0a0a0 0 1px, transparent 1px 2px); }
.grip:first-child { margin-left: 0; margin-right: 4px; }
.sep { width: 1px; height: 20px; margin: 0 3px 0 4px; background: #b8b8b8; }
.combo.small { flex: none; width: 100px; margin-right: 2px; color: #333; }
.combo.small select { padding-left: 4px; }
.combo.small + .grip { margin-left: 4px; }
.eb { display: flex; align-items: center; justify-content: center; width: 23px; height: 22px; color: #444; font-family: "DejaVu Serif", serif; font-size: 12px; font-weight: bold; }
.ital { font-style: italic; }
.under { text-decoration: underline; }
.wide { width: 28px; gap: 3px; }
.edbar .grip ~ .grip { margin-left: 4px; }
.caret { border-top-color: #000; }
.edbody {
  position: relative;
  min-height: 182px;
  margin: 5px 0 0 2px;
  padding: 12px 10px;
  border: 1px solid #c4c4c8;
  border-bottom-color: #e6eaee;
  border-right: 0;
  background: #fff;
  color: #000;
}
.edbody p { height: 33px; }
.over-body { position: absolute; left: 0; top: 1px; }
.edfoot { display: flex; gap: 2px; padding: 5px 2px 2px; }
.mode { display: flex; align-items: center; justify-content: center; width: 20px; height: 20px; border: 1px solid #c8c0c0; background: #f8f8f8; }
.mode.on { border-color: #7f9db9; background: #ffffc8; }
.editor.open { border-bottom: 0; }
.edbody.short { min-height: 62px; padding: 13px 10px 0; border-bottom: 0; }

/* numbered explanations */
.item { display: grid; grid-template-columns: 18px 1fr; gap: 5px; margin-left: 20px; color: #000; }
.item h2 { font: bold 16px/20px "Noto Sans CJK SC", sans-serif; height: 20px; }
.item small { font: bold 14px/20px Lato, sans-serif; }
.item p { font-size: 13px; line-height: 20px; height: 20px; white-space: nowrap; }
.item .en { font: 12px/20px Lato, sans-serif; }
.item .mid-en { font-size: 13px; }
.item .big { font-size: 15px; line-height: 22px; height: 22px; }
.item .big-en { font-size: 14px; line-height: 24px; height: 24px; }
.item .spaced { margin-top: 22px; }
.wavy { text-decoration: underline wavy #008000 1px; }
.first { margin: 28px 0 0 26px; }
.second { margin: 19px 0 0 26px; }
.first h2, .second h2 { height: 22px; }
.first .en, .second .en { height: 18px; }
.third { margin-top: 12px; }
.fourth { margin-top: 6px; }
.fifth { margin-top: 2px; }
.seventh { margin-top: 22px; }

.shot { position: relative; background: #fafafa; }

.shot-area { width: 465px; height: 185px; margin-left: 51px; overflow: hidden; }
.area-row { padding: 9px 2px 5px 7px; border-bottom: 1px solid #c5d2e0; }
.area-row .lab { width: 98px; }
.shot-area .group { margin: 5px 0 0 0; border-left: 0; }
.shot-area .group legend { margin-left: 2px; }
.lab-state2 { width: 94px; padding-left: 7px; }
.shot-area .tabs { margin-left: 0; padding-left: 0; }

.tree {
  position: absolute;
  inset: 26px 2px 0 103px;
  border: 1px solid #8a8873;
  border-bottom: 0;
  background: #fff;
}
.tree li { display: flex; align-items: center; gap: 4px; height: 20px; padding-left: 5px; white-space: nowrap; }
.tree span { padding: 0 2px; border: 1px solid transparent; line-height: 16px; }
.tree .l2 { padding-left: 24px; }
.tree .l3 { padding-left: 43px; }
.tree .l4 { padding-left: 75px; }
.tree .picked { background: #316ac5; color: #fff; }
.tree .focus { border: 1px dashed #316ac5; }
.pm { width: 9px; height: 9px; }
.tip { position: absolute; left: 208px; right: 0; bottom: 0; height: 4px; border-top: 1px solid #000; background: #ffffe1; }

.shot-level { width: 364px; height: 102px; margin: 2px 0 0 2px; padding: 1px 2px 2px; border-bottom: 2px solid #ffffc8; }
.shot-level .combo { margin-left: 2px; }
.combo .sel-text { color: #fff; background: linear-gradient(#0a246a, #0a246a) 1px 2px / 13px 14px no-repeat; }
.menu { position: absolute; left: 2px; right: 2px; top: 18px; border: 1px solid #8a8873; background: #fff; color: #333; }
.menu li { height: 20px; padding-left: 2px; line-height: 20px; display: flex; align-items: center; }
.menu .hot { background: #316ac5; color: #fff; }
.menu em { padding: 0 1px; color: #f00; font: 11px/14px "Liberation Sans", sans-serif; }
.menu .low { margin-left: 30px; padding-right: 6px; background: #fff; }
.menu .high { margin-left: 26px; }
.menu .serious { margin-left: 10px; }
.menu .medium { margin-left: 20px; }

.files { width: 100%; border-collapse: separate; border-spacing: 2px; font-size: 12px; }
.files th { height: 24px; padding: 0; background: #eee; color: #222; font-size: 13px; text-align: left; vertical-align: top; border-bottom: 1px solid #d8d8d8; }
.files th + th { padding-left: 2px; }
.files .c0 { width: 17px; }
.files .c2 { width: 91px; }
.files td { height: 24px; padding: 0 4px; background: #ffffc8; border: 1px solid #dcdcdc; border-right: 0; color: #000; }
.grid-wrap { border: 1px solid #d4d8dc; border-right: 0; border-width: 1px 0 0 1px; margin-top: 2px; background: #fff; }

.shot-att { width: 536px; max-width: 100%; margin: 2px 0 0 25px; }
.shot-att .tabs, .shot-pick .tabs { margin: 0 0 0 3px; padding-left: 4px; }
.shot-att .tabs { height: 25px; }
.shot-att .warn { padding: 0 9px; }
.att-panel { margin-left: 3px; padding: 0 0 0 2px; }
.add { display: block; height: 21px; padding-left: 3px; color: #003c8c; line-height: 20px; text-decoration: none; border-bottom: 1px solid #dcdcdc; }
.att-end { height: 26px; background: linear-gradient(#fff, #fff) 138px 0 / 235px 100% no-repeat; }

.ink { position: absolute; fill: none; stroke: #f00; stroke-width: 1px; }
.note { position: absolute; color: #f00; font: 11px/14px "Liberation Sans", sans-serif; white-space: nowrap; }
.ink-add { left: 0; top: 79px; width: 150px; height: 34px; }
.note-add { left: 145px; top: 102px; }

.shot-pick { width: 614px; max-width: 100%; margin: 13px 0 0 28px; background: #fff; }
.shot-pick .tabs { margin: 0; }
.pick-panel { margin: 0; padding: 14px 0 2px 2px; }
.hint { height: 18px; line-height: 18px; }
.pick-row { padding-top: 5px; margin-bottom: 8px; }
.pick-row .lab { width: 165px; padding-left: 1px; }
.path { flex: none; width: 374px; height: 19px; border: 2px solid #d4d0c8; border-top-color: #606060; border-left-color: #606060; background: #d4d0c8; }
.w-btn {
  background: #d4d0c8;
  border: 1px solid;
  border-color: #fff #404040 #404040 #fff;
  box-shadow: inset -1px -1px #808080;
  color: #000;
}
.browse { width: 60px; height: 19px; margin-left: 4px; line-height: 16px; font-size: 12px; color: #444; }
.ink-browse { right: 0; top: 51px; width: 72px; height: 37px; }
.note-browse { left: 416px; top: 47px; }

/* file picker */
.dialog {
  position: relative;
  width: 563px;
  margin-left: 5px;
  padding: 3px;
  border: 1px solid;
  border-color: #d4d0c8 #404040 #404040 #d4d0c8;
  box-shadow: inset 1px 1px #fff, inset -1px -1px #808080;
  background: #d4d0c8;
  color: #000;
}
.d-title { display: flex; align-items: center; gap: 2px; height: 18px; padding: 0 2px; background: linear-gradient(90deg, #0a246a, #a6caf0); color: #fff; font-size: 13px; font-weight: bold; }
.d-title span { flex: 1; }
.cap { width: 16px; height: 14px; font: bold 13px/11px "DejaVu Sans", sans-serif; }
.d-body { display: grid; grid-template-columns: 86px 1fr; gap: 7px; padding: 9px 5px 11px 6px; }
.d-look { padding-left: 14px; line-height: 18px; white-space: nowrap; }
.d-nav { display: flex; align-items: center; gap: 8px; }
.w-combo {
  display: flex;
  align-items: center;
  position: relative;
  height: 21px;
  border: 1px solid;
  border-color: #808080 #fff #fff #808080;
  box-shadow: inset 1px 1px #404040;
  background: #fff;
}
.w-combo select { appearance: none; flex: 1; height: 19px; padding: 0 18px 0 3px; outline: 0; }
.w-combo::before {
  content: "";
  position: absolute;
  inset: 1px 1px 1px auto;
  width: 16px;
  background: #d4d0c8;
  border: 1px solid;
  border-color: #fff #404040 #404040 #fff;
  pointer-events: none;
}
.w-combo::after { content: ""; position: absolute; right: 6px; top: 8px; border: 3px solid transparent; border-top: 4px solid #000; border-bottom: 0; pointer-events: none; }
.look { width: 260px; margin-right: 8px; padding-left: 5px; }
.nav { display: flex; align-items: center; gap: 2px; }

.places { display: flex; flex-direction: column; gap: 1px; padding: 5px 0; background: #808080; border: 1px solid; border-color: #808080 #fff #fff #808080; box-shadow: inset 1px 1px #404040; }
.place { display: flex; flex-direction: column; align-items: center; height: 50px; color: #fff; line-height: 17px; }
.place svg { width: 32px; height: 32px; }

.d-main { min-width: 0; }
.list { padding: 1px; border: 1px solid; border-color: #808080 #fff #fff #808080; box-shadow: inset 1px 1px #404040; background: #fff; }
.list ul { display: grid; grid-template: repeat(15, 17px) / 159px 159px 1fr; grid-auto-flow: column; padding: 1px 0 7px 1px; }
.list li { display: flex; align-items: center; min-width: 0; font: 11px/16px "Liberation Sans", sans-serif; white-space: nowrap; }
.list li span { padding: 0 2px 0 1px; }
.list .dim svg { opacity: .5; }
.list .chosen span { background: #0a246a; color: #fff; }
.scroll { display: flex; height: 15px; }
.arrow { display: flex; align-items: center; justify-content: center; width: 16px; }
.arrow::before { content: ""; border: 4px solid transparent; }
.la::before { border-right-color: #000; border-left: 0; }
.ra::before { border-left-color: #000; border-right: 0; }
.thumb { flex: 0 0 62%; background: #d4d0c8; border: 1px solid; border-color: #fff #404040 #404040 #fff; }
.track { flex: 1; background: repeating-conic-gradient(#d4d0c8 0 25%, #fff 0 50%) 0 0 / 2px 2px; }

.d-form { display: grid; grid-template-columns: 89px 247px 76px; gap: 6px 7px; align-items: center; margin-top: 10px; }
.d-form label { padding-left: 2px; white-space: nowrap; }
.d-form .w-combo { margin-right: 1px; }
.d-form .act { margin-left: 26px; margin-right: -26px; }
.act { position: relative; height: 22px; line-height: 18px; }
.act.main { border-color: #000; box-shadow: inset 1px 1px #fff, inset -1px -1px #808080; }
.mark { position: absolute; inset: -5px -8px -5px -10px; border: 1px solid #f00; }
.resize { position: absolute; right: 3px; bottom: 3px; width: 12px; height: 12px; }
```
